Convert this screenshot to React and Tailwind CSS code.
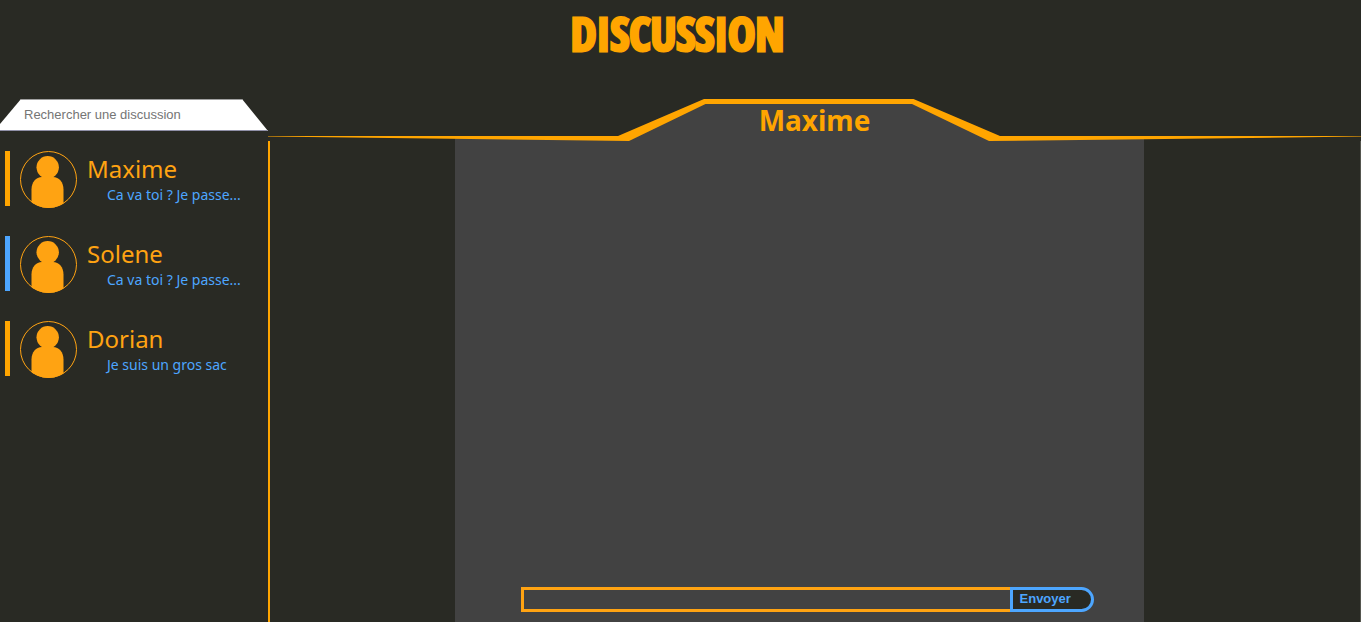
import React from "react";

const discussions = [
  { name: "Maxime", preview: "Ca va toi ? Je passe...", bar: "bg-[#ffa500]" },
  { name: "Solene", preview: "Ca va toi ? Je passe...", bar: "bg-[#4da6ff]" },
  { name: "Dorian", preview: "Je suis un gros sac", bar: "bg-[#ffa500]" },
];

function Avatar() {
  return (
    <svg viewBox="0 0 57 57" className="size-[57px] shrink-0" aria-hidden="true">
      <defs>
        <clipPath id="avatar-disc">
          <circle cx="28.5" cy="28.5" r="28.5" />
        </clipPath>
      </defs>
      <g fill="#ffa312" clipPath="url(#avatar-disc)">
        <circle cx="27.7" cy="16.3" r="11.2" />
        <path d="M11.5 57V38.5C11.5 31 16 26 22 26H33C39 26 43.5 31 43.5 38.5V57Z" />
      </g>
      <circle cx="28.5" cy="28.5" r="28" fill="none" stroke="#ffa312" />
    </svg>
  );
}

function Discussion({ name, preview, bar }) {
  return (
    <li>
      <a href="#" className="flex h-[57px] items-start">
        <span className={`h-[55px] w-[5px] shrink-0 ${bar}`} />
        <span className="ml-[10px] flex">
          <Avatar />
        </span>
        <span className="ml-[10px] flex min-w-0 flex-col pt-[3px]">
          <span className="text-[24px] leading-[30px] text-[#ffa312]">{name}</span>
          <span className="truncate pl-5 text-[14px] leading-[22px] text-[#4da6ff]">{preview}</span>
        </span>
      </a>
    </li>
  );
}

export default function App() {
  return (
    <div className="min-h-screen bg-white pr-[5px] font-['Noto_Sans','Open_Sans',sans-serif]">
      <div className="flex min-h-screen flex-col bg-[#292a24]">
        <header className="flex h-[99px] justify-center pr-[6px] pt-[7px]">
          <h1 className="font-['Open_Sans_Condensed','Roboto_Condensed','Noto_Sans_Condensed','Roboto',sans-serif] text-[46px] leading-[52px] font-bold text-[#ffa500] [-webkit-text-stroke:3px_#ffa500] [stroke-linejoin:round]">
            DISCUSSION
          </h1>
        </header>

        <div className="flex flex-1">
          <aside className="flex w-[268px] shrink-0 flex-col">
            <input
              type="text"
              aria-label="Rechercher une discussion"
              placeholder="Rechercher une discussion"
              className="h-8 w-full border-y border-t-[#a0a0a0] border-b-[#9090a8] bg-white pr-8 pb-[2px] pl-6 font-['Liberation_Sans',sans-serif] text-[13px] leading-5 text-black outline-none placeholder:text-[#757575] [clip-path:polygon(21px_0,242px_0,100%_100%,0_100%,0_25px)]"
            />
            <ul className="mt-5 flex flex-col gap-7 pl-[5px]">
              {discussions.map((d) => (
                <Discussion key={d.name} {...d} />
              ))}
            </ul>
          </aside>

          <main className="flex min-w-0 flex-1 flex-col">
            <div className="grid h-[42px]">
              <svg
                viewBox="0 0 1093 42"
                preserveAspectRatio="none"
                className="col-start-1 row-start-1 h-[42px] w-full"
                aria-hidden="true"
              >
                <path d="M187 42V39L355 39L437 3H645L727 39H876V42Z" fill="#424242" />
                <path
                  d="M0 37H350L436 0H645.5L732 37H1093V37.6L721 42L644 5H437.5L361 42L0 37.6Z"
                  fill="#ffa500"
                />
              </svg>
              <h2 className="col-start-1 row-start-1 self-center text-center text-[28px] leading-[40px] font-bold text-[#ffa500]">
                Maxime
              </h2>
            </div>
            <div className="flex flex-1 border-r border-l-2 border-r-[#55564f] border-l-[#ffa500]">
              <section className="ml-[17%] flex w-[63.2%] flex-col justify-end bg-[#424242] pb-[10px]">
                <form className="ml-[66px] mr-[50px] flex h-[25px]" onSubmit={(e) => e.preventDefault()}>
                  <input
                    type="text"
                    aria-label="Message"
                    className="min-w-0 flex-1 border-[3px] border-r-0 border-[#ffa312] bg-transparent px-1 text-sm text-white outline-none"
                  />
                  <button
                    type="submit"
                    className="w-[84px] rounded-r-full border-[3px] border-[#4da6ff] bg-[#292a24] pr-[14px] pb-[2px] font-['Liberation_Sans',sans-serif] text-[13px] leading-[17px] font-bold text-[#4da6ff]"
                  >
                    Envoyer
                  </button>
                </form>
              </section>
            </div>
          </main>
        </div>
      </div>
    </div>
  );
}
